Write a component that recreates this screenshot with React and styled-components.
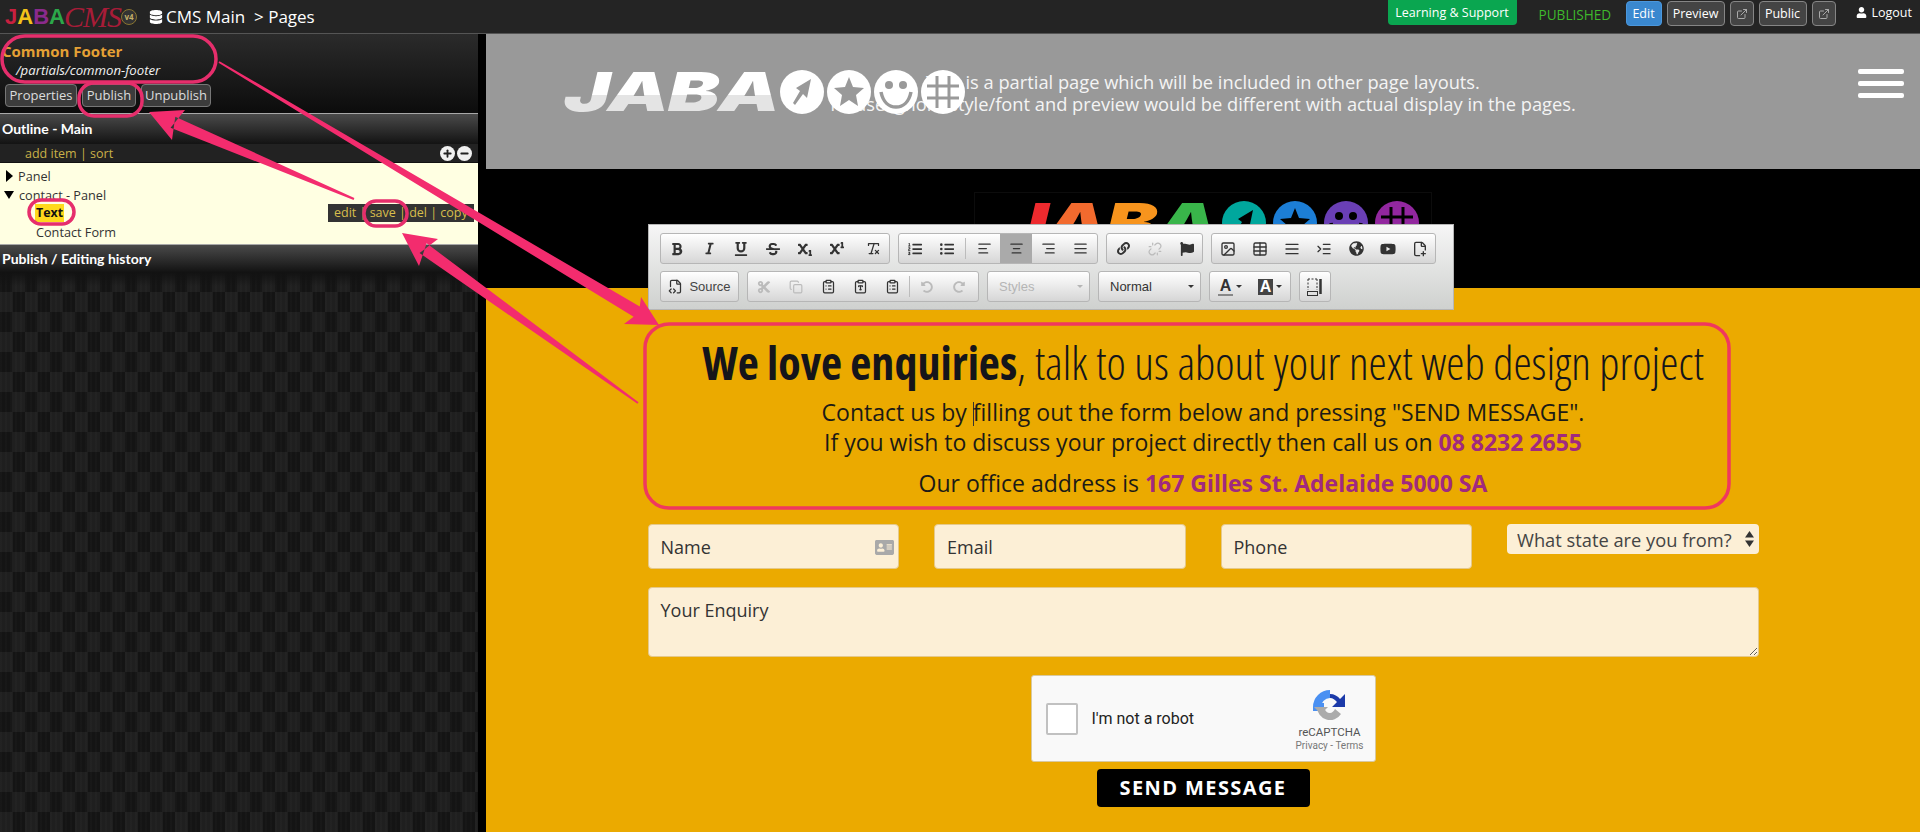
import React from 'react';
import styled, { createGlobalStyle } from 'styled-components';
import {
  FaBold, FaItalic, FaUnderline, FaStrikethrough, FaSubscript, FaSuperscript,
  FaDatabase, FaAddressCard, FaUser, FaFlag, FaCut, FaUndoAlt, FaRedoAlt, FaYoutube,
  FaGlobeAmericas, FaLink, FaListUl, FaListOl,
} from 'react-icons/fa';
import {
  ExternalLink, RemoveFormatting, AlignLeft, AlignCenter, AlignRight, AlignJustify,
  Unlink, Image, Table, Indent, Copy, ClipboardList, ClipboardType, FileCode2,
  FilePlus2, Plus, Minus,
} from 'lucide-react';

const PINK = '#f32c6e';

const Global = createGlobalStyle`
  html, body { margin: 0; padding: 0; background: #000; }
  body { font-family: "Open Sans", "Liberation Sans", sans-serif; }
  * { box-sizing: border-box; }
`;

const Page = styled.div`
  position: relative;
  width: 1920px;
  height: 832px;
  overflow: hidden;
  display: flex;
  flex-direction: column;
`;

/* top bar */
const TopBar = styled.header`
  height: 34px;
  flex: none;
  display: flex;
  align-items: flex-start;
  justify-content: space-between;
  padding-right: 8px;
  background: #242424;
  border-bottom: 1px solid #555;
  color: #fff;
`;
const BarLeft = styled.div`
  display: flex;
  align-items: center;
  height: 33px;
  padding-left: 5px;
`;
const BarRight = styled.div`
  display: flex;
  align-items: flex-start;
`;
const BrandWord = styled.div`
  font: bold 22px "Liberation Sans", sans-serif;
  display: flex;
  width: 59px;
`;
const BrandLetter = styled.span`
  color: ${p => p.$color};
`;
const BrandScript = styled.span`
  font: italic 30px/33px "Liberation Serif", serif;
  color: #a81c38;
  width: 57px;
  height: 33px;
  letter-spacing: -1px;
  white-space: nowrap;
`;
const Version = styled.span`
  width: 16px;
  height: 16px;
  border-radius: 50%;
  border: 1px solid #8a7530;
  background: #333;
  color: #c4b06a;
  font: bold 8px/14px "Open Sans", sans-serif;
  text-align: center;
`;
const Crumb = styled.div`
  display: flex;
  align-items: center;
  gap: 3px;
  margin-left: 12px;
  font-size: 17px;
  white-space: pre;
`;
const Support = styled.div`
  width: 129px;
  height: 25px;
  background: #0aa650;
  border-radius: 0 0 4px 4px;
  font-size: 12.5px;
  line-height: 25px;
  text-align: center;
`;
const Status = styled.div`
  margin: 6px 14px 0 22px;
  width: 73px;
  color: #3fb82c;
  font-size: 13.6px;
  line-height: 17px;
  white-space: nowrap;
`;
const BarButton = styled.div`
  display: flex;
  align-items: center;
  justify-content: center;
  width: ${p => p.$w}px;
  height: 25px;
  margin: 1px 5px 0 0;
  border: 1px solid ${p => (p.$active ? '#4b97dc' : '#858585')};
  border-radius: 4px;
  background: ${p => (p.$active ? '#3a88cf' : '#444')};
  font-size: 12.5px;
`;
const Logout = styled.div`
  display: flex;
  align-items: center;
  gap: 5px;
  height: 25px;
  margin-left: 15px;
  font-size: 12.5px;
`;

/* left column */
const Body = styled.div`
  flex: 1;
  display: flex;
  min-height: 0;
`;
const Sidebar = styled.aside`
  width: 478px;
  flex: none;
  display: flex;
  flex-direction: column;
  background: #151515;
`;
const Gutter = styled.div`
  width: 8px;
  flex: none;
  background: #000;
`;
const PageInfo = styled.div`
  height: 79px;
  padding: 8px 2px 0;
  background: linear-gradient(#2b2b2b, #0c0c0c);
`;
const PageTitle = styled.div`
  font-size: 15px;
  line-height: 18px;
  font-weight: 700;
  color: #e5a135;
`;
const PagePath = styled.div`
  margin: 1px 0 0 14px;
  font-size: 13.2px;
  line-height: 18px;
  font-style: italic;
  color: #f2f2f2;
`;
const InfoButtons = styled.div`
  display: flex;
  gap: 5px;
  margin: 5px 0 0 3px;
`;
const InfoButton = styled.div`
  width: ${p => p.$w}px;
  height: 23px;
  border: 1px solid #777;
  border-radius: 4px;
  background: #3c3c3c;
  color: #ddd;
  font-size: 13px;
  line-height: 21px;
  text-align: center;
`;
const SectionHead = styled.div`
  height: ${p => p.$h}px;
  padding-left: 2px;
  border-top: 1px solid #a8a8a8;
  background: linear-gradient(#4a4a4a, #131313);
  color: #fff;
  font: bold 14px/${p => p.$h - 1}px Lato, sans-serif;
`;
const OutlineTools = styled.div`
  height: 19px;
  display: flex;
  align-items: center;
  justify-content: space-between;
  padding: 1px 6px 0 25px;
  background: #222;
  border-bottom: 1px solid #111;
  color: #c9b148;
  font-size: 12.5px;
`;
const RoundTools = styled.div`
  display: flex;
  gap: 2px;
`;
const RoundTool = styled.span`
  width: 15px;
  height: 15px;
  border-radius: 50%;
  background: #f0f0f0;
  color: #222;
  display: flex;
  align-items: center;
  justify-content: center;
`;
const Tree = styled.div`
  height: 81px;
  padding-top: 4px;
  background: #ffffe2;
  color: #333;
  font-size: 12.7px;
`;
const TreeRow = styled.div`
  height: 18.5px;
  display: flex;
  align-items: center;
  justify-content: space-between;
  padding-left: ${p => p.$indent}px;
  padding-right: 4px;
  line-height: 18px;
`;
const TreeLabel = styled.span`
  display: flex;
  align-items: center;
  gap: 5px;
`;
const Caret = styled.i`
  width: 0;
  height: 0;
  margin-left: ${p => (p.$open ? 0 : 1)}px;
  border-style: solid;
  border-color: transparent;
  ${p => p.$open
    ? 'border-width: 8px 5.5px 0; border-top-color: #000;'
    : 'border-width: 6px 0 6px 7px; border-left-color: #000;'}
`;
const Selected = styled.b`
  background: #ffd91c;
  color: #111;
  font-size: 12.4px;
  padding: 0 1px;
`;
const RowActions = styled.span`
  width: 146px;
  height: 18px;
  padding-left: 6px;
  background: #333;
  color: #d8be4c;
  font-size: 12.5px;
  line-height: 18px;
  white-space: pre;
`;
const Weave = styled.div`
  flex: 1;
  background:
    linear-gradient(#121212, rgba(18, 18, 18, 0) 14px),
    repeating-linear-gradient(90deg, rgba(255, 255, 255, 0.014) 0 2px, transparent 2px 5px),
    repeating-conic-gradient(#1f1f1f 0 25%, #141414 0 50%) 0 0 / 25px 40px;
`;

/* right column */
const Main = styled.main`
  flex: 1;
  display: flex;
  flex-direction: column;
  min-width: 0;
  position: relative;
`;
const Banner = styled.section`
  position: relative;
  height: 135px;
  flex: none;
  padding-top: 37px;
  background: #999;
  color: #f4f4f4;
  font-size: 18.3px;
  line-height: 22px;
  text-align: center;
`;
const BannerLogo = styled.div`
  position: absolute;
  left: 78px;
  top: 36px;
  text-align: left;
`;
const Burger = styled.div`
  position: absolute;
  right: 16px;
  top: 35px;
  display: flex;
  flex-direction: column;
  gap: 7px;
`;
const BurgerBar = styled.span`
  width: 46px;
  height: 5px;
  border-radius: 2px;
  background: #fff;
`;
const BlackBand = styled.section`
  height: 119px;
  flex: none;
  display: flex;
  justify-content: center;
  padding-top: 23px;
  background: #000;
  overflow: hidden;
`;
const LogoPlate = styled.div`
  width: 458px;
  height: 96px;
  padding: 8px 0 0 27px;
  border: 1px solid #0c0c0c;
`;
const LogoRow = styled.div`
  display: flex;
  align-items: center;
  gap: ${p => p.$gap}px;
`;
const LogoWord = styled.div`
  width: 213px;
  height: 42px;
  flex: none;
  font: italic 900 54px/42px Inter, "Liberation Sans", sans-serif;
  letter-spacing: -1px;
  white-space: nowrap;
  transform: scaleX(1.44);
  transform-origin: left center;
  ${p => p.$plain && `
    background: linear-gradient(#fff 58%, #e4e4e4 58%);
    -webkit-background-clip: text;
    background-clip: text;
    color: transparent;
  `}
`;
const LogoLetter = styled.span`
  color: ${p => p.$color};
`;
const BadgeMark = styled.svg`
  position: relative;
  flex: none;
`;
const Orange = styled.section`
  flex: 1;
  display: flex;
  flex-direction: column;
  align-items: center;
  padding-top: 47px;
  background: #ebaa00;
`;
const Column = styled.div`
  width: 1111px;
  display: flex;
  flex-direction: column;
  align-items: center;
`;
const Headline = styled.h1`
  margin: 0 0 8px;
  font-size: 46px;
  line-height: 54px;
  font-weight: 300;
  font-stretch: 75%;
  color: #15151a;
  white-space: nowrap;
`;
const Strong = styled.strong`
  font-weight: 700;
`;
const Lead = styled.p`
  margin: ${p => p.$top || 0}px 0 0;
  font-size: 23px;
  line-height: 30px;
  color: #1c1a16;
  white-space: nowrap;
`;
const Accent = styled.b`
  color: #a0297f;
`;
const TextCursor = styled.span`
  display: inline-block;
  width: 1px;
  height: 24px;
  margin-right: -1px;
  vertical-align: -5px;
  background: #333;
`;
const Fields = styled.div`
  width: 100%;
  margin-top: 26px;
  display: grid;
  grid-template-columns: repeat(4, 1fr);
  gap: 35px;
  align-items: start;
`;
const FieldWrap = styled.div`
  position: relative;
`;
const FieldIcon = styled.span`
  position: absolute;
  right: 5px;
  top: ${p => p.$top}px;
  color: ${p => p.$color};
  display: flex;
`;
const TextField = styled.input`
  display: block;
  width: 100%;
  height: 45px;
  padding: 0 12px;
  border: 1px solid #e5c98b;
  border-radius: 4px;
  background: #fcefd6;
  font: 18px "Open Sans", sans-serif;
  &::placeholder { color: #333; opacity: 1; }
`;
const StateSelect = styled.select`
  display: block;
  width: 100%;
  height: 30px;
  padding: 0 10px;
  appearance: none;
  border: none;
  border-radius: 4px;
  background: #fcefd6;
  color: #444;
  font: 18.3px "Open Sans", sans-serif;
`;
const Enquiry = styled.textarea`
  display: block;
  width: 100%;
  height: 70px;
  margin-top: 18px;
  padding: 10px 12px;
  border: 1px solid #e5c98b;
  border-radius: 4px;
  background: #fcefd6;
  font: 18px "Open Sans", sans-serif;
  &::placeholder { color: #333; opacity: 1; }
`;
const Captcha = styled.div`
  width: 345px;
  height: 87px;
  margin-top: 18px;
  padding: 0 11px 0 14px;
  display: flex;
  align-items: center;
  justify-content: space-between;
  background: #f9f9f9;
  border: 1px solid #d8c9a0;
  border-radius: 3px;
`;
const CaptchaCheck = styled.span`
  width: 32px;
  height: 32px;
  flex: none;
  background: #fff;
  border: 2px solid #c1c1c1;
  border-radius: 2px;
`;
const CaptchaLabel = styled.span`
  flex: 1;
  margin-left: 14px;
  font: 16px Roboto, sans-serif;
  color: #222;
`;
const CaptchaBrand = styled.div`
  display: flex;
  flex-direction: column;
  align-items: center;
  color: #555;
  font: 11.5px/14px Roboto, sans-serif;
  margin-top: 4px;
`;
const CaptchaLinks = styled.span`
  font-size: 10px;
  line-height: 14px;
  color: #777;
`;
const SendButton = styled.div`
  width: 213px;
  height: 38px;
  margin-top: 7px;
  background: #000;
  border-radius: 4px;
  color: #fff;
  font-size: 20px;
  font-weight: 700;
  letter-spacing: 1.4px;
  line-height: 38px;
  text-align: center;
`;

/* floating editor toolbar */
const Editor = styled.div`
  position: absolute;
  left: 162px;
  top: 190px;
  width: 806px;
  height: 86px;
  padding: 8px 11px;
  display: flex;
  flex-direction: column;
  gap: 7px;
  background: linear-gradient(#f6f6f6, #cfd1cf);
  border: 1px solid #b6b6b6;
`;
const EditorRow = styled.div`
  display: flex;
  gap: 8px;
`;
const EditorGroup = styled.div`
  display: flex;
  align-items: center;
  height: 31px;
  width: ${p => p.$w}px;
  border: 1px solid #b6b6b6;
  border-radius: 3px;
  background: linear-gradient(#fff, #d6d6d6);
  color: ${p => (p.$muted ? '#b5b5b5' : '#333')};
`;
const EditorButton = styled.span`
  width: ${p => p.$w || 32}px;
  height: 29px;
  flex: none;
  display: flex;
  align-items: center;
  justify-content: center;
  background: ${p => (p.$active ? '#aaa' : 'transparent')};
  color: ${p => (p.$muted ? '#bbb' : 'inherit')};
`;
const EditorSep = styled.span`
  width: 1px;
  height: 21px;
  margin: 0 ${p => p.$m || 2}px;
  background: #bcbcbc;
`;
const SourceLabel = styled.span`
  margin-left: 6px;
  font: 13px "Liberation Sans", sans-serif;
  color: #444;
`;
const Combo = styled.div`
  flex: 1;
  display: flex;
  align-items: center;
  justify-content: space-between;
  padding: 0 6px 0 11px;
  font: 13px "Liberation Sans", sans-serif;
`;
const ComboArrow = styled.i`
  width: 0;
  height: 0;
  border: 3px solid transparent;
  border-top: 3px solid currentColor;
  border-bottom: none;
`;
const ColorGlyph = styled.span`
  display: flex;
  align-items: center;
  justify-content: center;
  gap: 3px;
  width: 40px;
`;
const ColorLetter = styled.b`
  font: bold 16px/16px "Liberation Sans", sans-serif;
  padding: 0 2px;
  color: ${p => (p.$fill ? '#fff' : '#333')};
  background: ${p => (p.$fill ? '#444' : 'none')};
  border-bottom: ${p => (p.$fill ? 'none' : '2px solid #888')};
`;

/* annotation layer */
const Marks = styled.svg`
  position: absolute;
  left: 0;
  top: 0;
  pointer-events: none;
`;

// tapered arrow: thin tail growing towards the head
function arrowPath(tail, tip, wingA, wingB, neckLen = 26, half = 6) {
  const dx = tip[0] - tail[0];
  const dy = tip[1] - tail[1];
  const len = Math.hypot(dx, dy);
  const ux = dx / len;
  const uy = dy / len;
  const nx = -uy;
  const ny = ux;
  const neck = [tip[0] - ux * neckLen, tip[1] - uy * neckLen];
  const pts = [
    [tail[0] + nx, tail[1] + ny],
    [neck[0] + nx * half, neck[1] + ny * half],
    wingA,
    tip,
    wingB,
    [neck[0] - nx * half, neck[1] - ny * half],
    [tail[0] - nx, tail[1] - ny],
  ];
  return pts.map(p => p.join(',')).join(' ');
}

const rings = [
  { x: 2, y: 36, w: 214, h: 46, r: 23 },
  { x: 79, y: 83, w: 63, h: 33, r: 15 },
  { x: 29, y: 200, w: 45, h: 24, r: 12 },
  { x: 364, y: 201, w: 43, h: 25, r: 12 },
];

const arrows = [
  arrowPath([219, 62], [659, 325], [624, 324], [641, 297]),
  arrowPath([354, 199], [149, 112], [172, 140], [185, 110]),
  arrowPath([638, 403], [402, 233], [419, 266], [438, 239]),
];

const Annotations = () => (
  <Marks width="1920" height="832" viewBox="0 0 1920 832" fill="none">
    {rings.map(r => (
      <rect key={r.x} x={r.x} y={r.y} width={r.w} height={r.h} rx={r.r} stroke="#e62e6c" strokeWidth="3.5" />
    ))}
    <rect x="645" y="324" width="1084" height="184" rx="24" stroke="#f0385e" strokeWidth="3.5" />
    {arrows.map(points => <polygon key={points} points={points} fill={PINK} />)}
  </Marks>
);

const Badge = ({ kind, fill, cut }) => (
  <BadgeMark width="44" height="44" viewBox="0 0 44 44">
    <circle cx="22" cy="22" r="22" fill={fill} />
    {kind === 'rocket' && <polygon points="31,9 27,28 23,24 15,35 13,33 20,21 16,18" fill={cut} />}
    {kind === 'star' && <polygon points="22,7 26,17 37,18 29,25 31,36 22,30 13,36 15,25 7,18 18,17" fill={cut} />}
    {kind === 'smile' && (
      <>
        <circle cx="15" cy="15" r="4" fill={cut} />
        <circle cx="29" cy="15" r="4" fill={cut} />
        <path d="M7 22c2 10 8 15 15 15s13-5 15-15" stroke={cut} strokeWidth="3.5" fill="none" />
      </>
    )}
    {kind === 'hash' && (
      <path d="M16 6v32M28 6v32M6 16h32M6 28h32" stroke={cut} strokeWidth="3" />
    )}
  </BadgeMark>
);

const ShowBlocks = () => (
  <svg width="18" height="20" viewBox="0 0 18 20" fill="none" stroke="#333">
    <path d="M2 2h9M2 2v11M11 2v11" strokeDasharray="2 1.5" />
    <rect x="1.5" y="14.5" width="10" height="4" />
    <path d="M14.5 2v15" strokeWidth="2.5" />
  </svg>
);

const badges = ['rocket', 'star', 'smile', 'hash'];
const rainbow = ['#ee2a2e', '#f26a2e', '#f7941d', '#39b54a'];
const badgeColors = ['#00a79d', '#1c7ed6', '#6a3fb5', '#92279f'];

const RecaptchaMark = () => (
  <svg width="36" height="36" viewBox="0 0 36 36" fill="none">
    <path d="M18 5A13 13 0 0 0 5 18h7" stroke="#4a90f2" strokeWidth="8" />
    <path d="M18 5c4 0 8 2 10 5l5-5v13H20l5-5c-2-2-4-4-7-4z" fill="#1c3aa9" />
    <path d="M5 18a13 13 0 0 0 24 7l-6-5c-1 2-3 4-5 4-3 0-5-2-6-6z" fill="#ababab" />
    <path d="M2 18h14L9 25z" fill="#ababab" />
  </svg>
);

const App = () => (
  <Page>
    <Global />
    <TopBar>
      <BarLeft>
        <BrandWord>
          <BrandLetter $color="#c8203f">J</BrandLetter>
          <BrandLetter $color="#f2c21a">A</BrandLetter>
          <BrandLetter $color="#8a2a8c">B</BrandLetter>
          <BrandLetter $color="#2ca84a">A</BrandLetter>
        </BrandWord>
        <BrandScript>CMS</BrandScript>
        <Version>v4</Version>
        <Crumb>
          <FaDatabase size={14} />
          <span>CMS Main  &gt; Pages</span>
        </Crumb>
      </BarLeft>
      <BarRight>
        <Support>Learning &amp; Support</Support>
        <Status>PUBLISHED</Status>
        <BarButton $w={36} $active>Edit</BarButton>
        <BarButton $w={58}>Preview</BarButton>
        <BarButton $w={24}><ExternalLink size={12} color="#aaa" /></BarButton>
        <BarButton $w={48}>Public</BarButton>
        <BarButton $w={24}><ExternalLink size={12} color="#aaa" /></BarButton>
        <Logout><FaUser size={11} />Logout</Logout>
      </BarRight>
    </TopBar>
    <Body>
      <Sidebar>
        <PageInfo>
          <PageTitle>Common Footer</PageTitle>
          <PagePath>/partials/common-footer</PagePath>
          <InfoButtons>
            <InfoButton $w={72}>Properties</InfoButton>
            <InfoButton $w={54}>Publish</InfoButton>
            <InfoButton $w={70}>Unpublish</InfoButton>
          </InfoButtons>
        </PageInfo>
        <SectionHead $h={31}>Outline - Main</SectionHead>
        <OutlineTools>
          <span>add item | sort</span>
          <RoundTools>
            <RoundTool><Plus size={11} strokeWidth={4} /></RoundTool>
            <RoundTool><Minus size={11} strokeWidth={4} /></RoundTool>
          </RoundTools>
        </OutlineTools>
        <Tree>
          <TreeRow $indent={5}><TreeLabel><Caret />Panel</TreeLabel></TreeRow>
          <TreeRow $indent={4}><TreeLabel><Caret $open />contact - Panel</TreeLabel></TreeRow>
          <TreeRow $indent={35}>
            <Selected>Text</Selected>
            <RowActions>edit | save | del | copy</RowActions>
          </TreeRow>
          <TreeRow $indent={36}>Contact Form</TreeRow>
        </Tree>
        <SectionHead $h={28}>Publish / Editing history</SectionHead>
        <Weave />
      </Sidebar>
      <Gutter />
      <Main>
        <Banner>
          This is a partial page which will be included in other page layouts.<br />
          Please ignore style/font and preview would be different with actual display in the pages.
          <BannerLogo>
            <LogoRow $gap={3}>
              <LogoWord $plain>JABA</LogoWord>
              {badges.map(b => <Badge key={b} kind={b} fill="#fff" cut="#999" />)}
            </LogoRow>
          </BannerLogo>
          <Burger><BurgerBar /><BurgerBar /><BurgerBar /></Burger>
        </Banner>
        <BlackBand>
          <LogoPlate>
            <LogoRow $gap={7}>
              <LogoWord>
                {'JABA'.split('').map((c, i) => <LogoLetter key={i} $color={rainbow[i]}>{c}</LogoLetter>)}
              </LogoWord>
              {badges.map((b, i) => <Badge key={b} kind={b} fill={badgeColors[i]} cut="#000" />)}
            </LogoRow>
          </LogoPlate>
        </BlackBand>
        <Orange>
          <Column>
            <Headline><Strong>We love enquiries</Strong>, talk to us about your next web design project</Headline>
            <Lead>Contact us by <TextCursor />filling out the form below and pressing "SEND MESSAGE".</Lead>
            <Lead>If you wish to discuss your project directly then call us on <Accent>08 8232 2655</Accent></Lead>
            <Lead $top={11}>Our office address is <Accent>167 Gilles St. Adelaide 5000 SA</Accent></Lead>
            <Fields>
              <FieldWrap>
                <TextField placeholder="Name" readOnly />
                <FieldIcon $top={14} $color="#a9a9a9"><FaAddressCard size={19} /></FieldIcon>
              </FieldWrap>
              <TextField placeholder="Email" readOnly />
              <TextField placeholder="Phone" readOnly />
              <FieldWrap>
                <StateSelect defaultValue="state">
                  <option value="state">What state are you from?</option>
                </StateSelect>
                <FieldIcon $top={6} $color="#333">
                  <svg width="9" height="18" viewBox="0 0 9 18" fill="currentColor">
                    <polygon points="4.5,1 9,7.5 0,7.5" />
                    <polygon points="4.5,17 9,10.5 0,10.5" />
                  </svg>
                </FieldIcon>
              </FieldWrap>
            </Fields>
            <Enquiry placeholder="Your Enquiry" readOnly />
            <Captcha>
              <CaptchaCheck />
              <CaptchaLabel>I'm not a robot</CaptchaLabel>
              <CaptchaBrand>
                <RecaptchaMark />
                reCAPTCHA
                <CaptchaLinks>Privacy - Terms</CaptchaLinks>
              </CaptchaBrand>
            </Captcha>
            <SendButton>SEND MESSAGE</SendButton>
          </Column>
        </Orange>
        <Editor>
          <EditorRow>
            <EditorGroup $w={230}>
              <EditorButton><FaBold size={14} /></EditorButton>
              <EditorButton><FaItalic size={13} /></EditorButton>
              <EditorButton><FaUnderline size={14} /></EditorButton>
              <EditorButton><FaStrikethrough size={14} /></EditorButton>
              <EditorButton><FaSubscript size={14} /></EditorButton>
              <EditorButton><FaSuperscript size={14} /></EditorButton>
              <EditorSep />
              <EditorButton><RemoveFormatting size={15} /></EditorButton>
            </EditorGroup>
            <EditorGroup $w={200}>
              <EditorButton><FaListOl size={14} /></EditorButton>
              <EditorButton><FaListUl size={14} /></EditorButton>
              <EditorSep />
              <EditorButton><AlignLeft size={15} /></EditorButton>
              <EditorButton $active><AlignCenter size={15} /></EditorButton>
              <EditorButton><AlignRight size={15} /></EditorButton>
              <EditorButton><AlignJustify size={15} /></EditorButton>
            </EditorGroup>
            <EditorGroup $w={97}>
              <EditorButton><FaLink size={13} /></EditorButton>
              <EditorButton $muted><Unlink size={14} /></EditorButton>
              <EditorButton><FaFlag size={14} /></EditorButton>
            </EditorGroup>
            <EditorGroup $w={225}>
              <EditorButton><Image size={16} /></EditorButton>
              <EditorButton><Table size={16} /></EditorButton>
              <EditorButton><AlignJustify size={16} /></EditorButton>
              <EditorButton><Indent size={16} /></EditorButton>
              <EditorButton><FaGlobeAmericas size={15} /></EditorButton>
              <EditorButton><FaYoutube size={16} /></EditorButton>
              <EditorButton><FilePlus2 size={16} /></EditorButton>
            </EditorGroup>
          </EditorRow>
          <EditorRow>
            <EditorGroup $w={79}>
              <EditorButton $w={77}><FileCode2 size={15} /><SourceLabel>Source</SourceLabel></EditorButton>
            </EditorGroup>
            <EditorGroup $w={232}>
              <EditorButton $muted><FaCut size={14} /></EditorButton>
              <EditorButton $muted><Copy size={14} /></EditorButton>
              <EditorButton><ClipboardList size={15} /></EditorButton>
              <EditorButton><ClipboardType size={15} /></EditorButton>
              <EditorButton><ClipboardList size={15} /></EditorButton>
              <EditorSep $m={1} />
              <EditorButton $muted><FaUndoAlt size={12} /></EditorButton>
              <EditorButton $muted><FaRedoAlt size={12} /></EditorButton>
            </EditorGroup>
            <EditorGroup $w={103} $muted><Combo>Styles<ComboArrow /></Combo></EditorGroup>
            <EditorGroup $w={103}><Combo>Normal<ComboArrow /></Combo></EditorGroup>
            <EditorGroup $w={82}>
              <ColorGlyph><ColorLetter>A</ColorLetter><ComboArrow /></ColorGlyph>
              <ColorGlyph><ColorLetter $fill>A</ColorLetter><ComboArrow /></ColorGlyph>
            </EditorGroup>
            <EditorGroup $w={32}><EditorButton $w={30}><ShowBlocks /></EditorButton></EditorGroup>
          </EditorRow>
        </Editor>
      </Main>
    </Body>
    <Annotations />
  </Page>
);

export default App;
